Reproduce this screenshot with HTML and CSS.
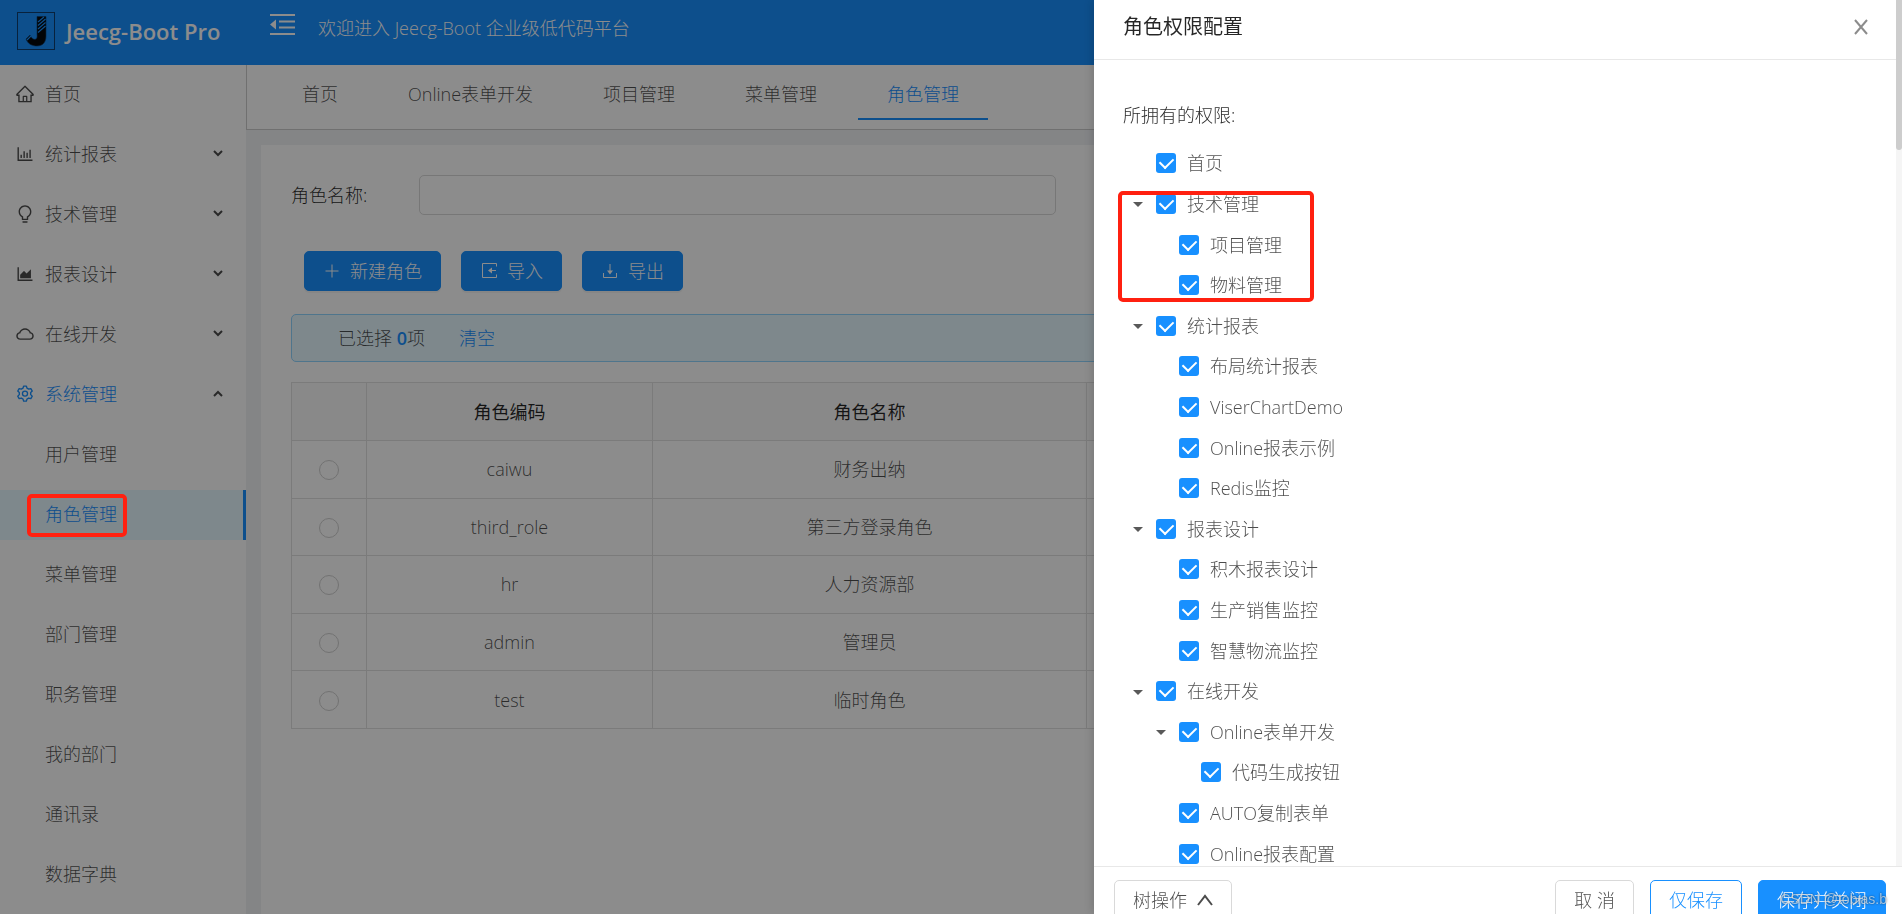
FILE: index.html
```html
<!DOCTYPE html>
<html lang="zh-CN">
<head>
<meta charset="utf-8">
<title>角色管理 - Jeecg-Boot Pro</title>
<link rel="stylesheet" href="styles.css">
</head>
<body>
<div class="app">
  <header class="topbar">
    <div class="brand">
      <svg class="logo" viewBox="0 0 38 38" aria-hidden="true"><rect x=".5" y=".5" width="37" height="37" fill="none" stroke="#0f3f70"/><path d="M20 4.500h9V24c0 6-3 10-9 10-5 0-9-2-11-7l4-4c2 4 4 5 6 4 1.500-1 1-3 1-5z" fill="#05080c" stroke="#0f3f70" stroke-width=".6"/><path d="M21 10l6-5M21 13.500l7.500-6.500M21 17l7.500-6.500M21 20.500l7.500-6.500M10 28l4-4" stroke="#1890ff" stroke-width="1.200"/></svg>
      <h1 class="brand-name">Jeecg-Boot Pro</h1>
    </div>
    <button class="fold" type="button" aria-label="收起菜单"><svg viewBox="0 0 25 21" aria-hidden="true"><path d="M0 1h25M9 7.500h16M9 13.500h16M0 20h25" stroke="currentColor" stroke-width="2" fill="none"/><path d="M6 5.500v10L0 10.500z" fill="currentColor"/></svg></button>
    <span class="welcome">欢迎进入 Jeecg-Boot 企业级低代码平台</span>
  </header>
  <div class="layout">
    <nav class="sidebar">
      <a class="item" href="#"><svg class="ico" viewBox="0 0 1024 1024"><path d="M946.500 505L560.100 118.800l-25.900-25.900a31.500 31.500 0 0 0-44.400 0L77.500 505a63.900 63.900 0 0 0-18.800 46c.4 35.200 29.700 63.300 64.900 63.300h42.500V940h691.800V614.300h43.400c17.100 0 33.200-6.700 45.300-18.800a63.600 63.600 0 0 0 18.700-45.300c0-17-6.700-33.100-18.800-45.200zM568 868H456V664h112v204zm217.900-325.700V868H632V640c0-22.100-17.900-40-40-40H432c-22.100 0-40 17.900-40 40v228H238.100V542.300h-96l370-369.700 23.100 23.100L882 542.300h-96.100z"/></svg>首页</a>
      <a class="item" href="#"><svg class="ico" viewBox="0 0 1024 1024"><path d="M888 792H200V168c0-4.400-3.600-8-8-8h-56c-4.400 0-8 3.600-8 8v688c0 4.400 3.600 8 8 8h752c4.400 0 8-3.600 8-8v-56c0-4.400-3.600-8-8-8zm-600-80h56c4.400 0 8-3.600 8-8V560c0-4.400-3.600-8-8-8h-56c-4.400 0-8 3.600-8 8v144c0 4.400 3.600 8 8 8zm152 0h56c4.400 0 8-3.600 8-8V384c0-4.400-3.600-8-8-8h-56c-4.400 0-8 3.600-8 8v320c0 4.400 3.600 8 8 8zm152 0h56c4.400 0 8-3.600 8-8V462c0-4.400-3.600-8-8-8h-56c-4.400 0-8 3.600-8 8v242c0 4.400 3.600 8 8 8zm152 0h56c4.400 0 8-3.600 8-8V304c0-4.400-3.600-8-8-8h-56c-4.400 0-8 3.600-8 8v400c0 4.400 3.600 8 8 8z"/></svg>统计报表<svg class="arrow" viewBox="0 0 12 8"><path d="M2 1l4 4 4-4"/></svg></a>
      <a class="item" href="#"><svg class="ico" viewBox="0 0 1024 1024"><path d="M632 888H392c-4.400 0-8 3.600-8 8v32c0 17.700 14.300 32 32 32h192c17.700 0 32-14.300 32-32v-32c0-4.400-3.600-8-8-8zM512 64c-181.100 0-328 146.900-328 328 0 121.400 66 227.400 164 284.100V792c0 17.700 14.300 32 32 32h264c17.700 0 32-14.300 32-32V676.100c98-56.700 164-162.700 164-284.100 0-181.100-146.900-328-328-328zm127.900 549.800L604 634.600V752H420V634.600l-35.900-20.800C305.400 568.300 256 484.500 256 392c0-141.400 114.600-256 256-256s256 114.600 256 256c0 92.500-49.400 176.300-128.100 221.800z"/></svg>技术管理<svg class="arrow" viewBox="0 0 12 8"><path d="M2 1l4 4 4-4"/></svg></a>
      <a class="item" href="#"><svg class="ico" viewBox="0 0 1024 1024"><path d="M888 792H200V168c0-4.400-3.600-8-8-8h-56c-4.400 0-8 3.600-8 8v688c0 4.400 3.600 8 8 8h752c4.400 0 8-3.600 8-8v-56c0-4.400-3.600-8-8-8zm-616-64h536c4.400 0 8-3.600 8-8V284c0-7.200-8.700-10.700-13.700-5.700L592 488.600l-125.400-124a8 8 0 0 0-11.300 0l-189 189.600a7.900 7.900 0 0 0-2.300 5.600V720c0 4.400 3.600 8 8 8z"/></svg>报表设计<svg class="arrow" viewBox="0 0 12 8"><path d="M2 1l4 4 4-4"/></svg></a>
      <a class="item" href="#"><svg class="ico" viewBox="0 0 1024 1024"><path d="M811.400 418.700C765.600 297.900 648.900 212 512.200 212S258.800 297.800 213 418.600C127.300 441.100 64 519.100 64 612c0 110.500 89.500 200 199.900 200h496.200C870.500 812 960 722.500 960 612c0-92.700-63.100-170.700-148.600-193.300zm36.300 281a123.070 123.070 0 0 1-87.600 36.300H263.900c-33.100 0-64.200-12.900-87.600-36.300A123.300 123.300 0 0 1 140 612c0-28 9.100-54.300 26.200-76.300a125.700 125.700 0 0 1 66.100-43.700l37.900-9.900 13.900-36.600c8.600-22.800 20.600-44.100 35.700-63.400a245.600 245.600 0 0 1 52.400-49.900c41.100-28.900 89.500-44.200 140-44.200s98.900 15.300 140 44.200c19.900 14 37.500 30.800 52.400 49.900 15.100 19.300 27.100 40.700 35.700 63.400l13.800 36.500 37.800 10c54.300 14.500 92.100 63.800 92.100 120 0 33.100-12.900 64.300-36.300 87.700z"/></svg>在线开发<svg class="arrow" viewBox="0 0 12 8"><path d="M2 1l4 4 4-4"/></svg></a>
      <a class="item open" href="#"><svg class="ico" viewBox="0 0 1024 1024"><g fill="none" stroke="currentColor" stroke-width="68" stroke-linejoin="round"><path d="M440 105h144l28 108 92 53 108-30 72 125-80 78v106l80 78-72 125-108-30-92 53-28 108H440l-28-108-92-53-108 30-72-125 80-78V439l-80-78 72-125 108 30 92-53z"/><circle cx="512" cy="492" r="130"/></g></svg>系统管理<svg class="arrow" viewBox="0 0 12 8"><path d="M2 6l4-4 4 4"/></svg></a>
      <a class="item sub" href="#">用户管理</a>
      <a class="item sub active" href="#" aria-current="page">角色管理</a>
      <a class="item sub" href="#">菜单管理</a>
      <a class="item sub" href="#">部门管理</a>
      <a class="item sub" href="#">职务管理</a>
      <a class="item sub" href="#">我的部门</a>
      <a class="item sub" href="#">通讯录</a>
      <a class="item sub" href="#">数据字典</a>
    </nav>
    <main class="main">
      <nav class="tabs">
        <a class="tab" href="#">首页</a>
        <a class="tab" href="#">Online表单开发</a>
        <a class="tab" href="#">项目管理</a>
        <a class="tab" href="#">菜单管理</a>
        <a class="tab current" href="#">角色管理</a>
      </nav>
      <section class="card">
        <form class="search">
          <label for="role-name">角色名称:</label>
          <input id="role-name" class="text-input" type="text">
        </form>
        <div class="actions">
          <button class="btn primary" type="button"><svg class="bico" viewBox="0 0 18 18"><path d="M9 2.500v13M2.500 9h13"/></svg>新建角色</button>
          <button class="btn primary" type="button"><svg class="bico" viewBox="0 0 18 18"><path d="M16.500 4.500v-3h-14v14h14v-3M16 8.500H9"/><path d="M8 8.500l4-3v6z" fill="currentColor" stroke="none"/></svg>导入</button>
          <button class="btn primary" type="button"><svg class="bico" viewBox="0 0 18 18"><path d="M2.500 11v4.500h13V11M9 2v8"/><path d="M9 12.500l-3-4h6z" fill="currentColor" stroke="none"/></svg>导出</button>
        </div>
        <div class="notice"><span>已选择 <b>0</b>项</span><a href="#">清空</a></div>
        <table class="grid">
          <colgroup><col class="c-pick"><col class="c-code"><col class="c-name"><col></colgroup>
          <thead><tr><th></th><th>角色编码</th><th>角色名称</th><th></th></tr></thead>
          <tbody>
            <tr><td><input type="radio" name="role" aria-label="caiwu"></td><td>caiwu</td><td>财务出纳</td><td></td></tr>
            <tr><td><input type="radio" name="role" aria-label="third_role"></td><td>third_role</td><td>第三方登录角色</td><td></td></tr>
            <tr><td><input type="radio" name="role" aria-label="hr"></td><td>hr</td><td>人力资源部</td><td></td></tr>
            <tr><td><input type="radio" name="role" aria-label="admin"></td><td>admin</td><td>管理员</td><td></td></tr>
            <tr><td><input type="radio" name="role" aria-label="test"></td><td>test</td><td>临时角色</td><td></td></tr>
          </tbody>
        </table>
      </section>
    </main>
  </div>
</div>
<div class="mask"></div>
<div class="mark mark-menu"></div>
<aside class="drawer">
  <div class="drawer-view">
    <div class="drawer-content">
      <div class="drawer-head">
        <h2 class="drawer-title">角色权限配置</h2>
        <button class="close" type="button" aria-label="关闭"><svg viewBox="0 0 16 16"><path d="M2 1l12 14M14 1L2 15"/></svg></button>
      </div>
      <div class="drawer-body">
        <p class="tree-label">所拥有的权限:</p>
        <ul class="tree">
          <li class="node"><label><input type="checkbox" checked>首页</label></li>
          <li class="node parent"><label><input type="checkbox" checked>技术管理</label></li>
          <li class="node l2"><label><input type="checkbox" checked>项目管理</label></li>
          <li class="node l2"><label><input type="checkbox" checked>物料管理</label></li>
          <li class="node parent"><label><input type="checkbox" checked>统计报表</label></li>
          <li class="node l2"><label><input type="checkbox" checked>布局统计报表</label></li>
          <li class="node l2"><label><input type="checkbox" checked>ViserChartDemo</label></li>
          <li class="node l2"><label><input type="checkbox" checked>Online报表示例</label></li>
          <li class="node l2"><label><input type="checkbox" checked>Redis监控</label></li>
          <li class="node parent"><label><input type="checkbox" checked>报表设计</label></li>
          <li class="node l2"><label><input type="checkbox" checked>积木报表设计</label></li>
          <li class="node l2"><label><input type="checkbox" checked>生产销售监控</label></li>
          <li class="node l2"><label><input type="checkbox" checked>智慧物流监控</label></li>
          <li class="node parent"><label><input type="checkbox" checked>在线开发</label></li>
          <li class="node l2 parent"><label><input type="checkbox" checked>Online表单开发</label></li>
          <li class="node l3"><label><input type="checkbox" checked>代码生成按钮</label></li>
          <li class="node l2"><label><input type="checkbox" checked>AUTO复制表单</label></li>
          <li class="node l2"><label><input type="checkbox" checked>Online报表配置</label></li>
        </ul>
      </div>
    </div>
    <div class="track"><div class="thumb"></div></div>
  </div>
  <footer class="drawer-foot">
    <button class="btn" type="button">树操作<svg class="up" viewBox="0 0 16 12"><path d="M1 11l7-9 7 9"/></svg></button>
    <div class="foot-right">
      <button class="btn" type="button">取 消</button>
      <button class="btn ghost" type="button">仅保存</button>
      <button class="btn primary" type="button">保存并关闭</button>
    </div>
  </footer>
</aside>
<div class="mark mark-tree"></div>
<span class="watermark">CSDN @tobias.b</span>
</body>
</html>
```
FILE: styles.css
```css
* { box-sizing: border-box; }
body {
  margin: 0;
  height: 100vh;
  overflow: hidden;
  font: 300 18px/26px "Open Sans", "Noto Sans CJK SC", sans-serif;
  color: rgba(0, 0, 0, .7);
  background: #f0f2f5;
}
a { color: inherit; text-decoration: none; }
button, input { font: inherit; color: inherit; }
h1, h2, p, ul { margin: 0; padding: 0; }

.app { display: flex; flex-direction: column; height: 100vh; }
.topbar {
  display: flex;
  flex: none;
  height: 65px;
  color: #fff;
  background: #1890ff;
}
.brand { display: flex; align-items: center; gap: 11px; width: 246px; padding-left: 17px; height: 62px; }
.logo { width: 38px; height: 38px; display: block; }
.brand-name { font-size: 22px; font-weight: 600; line-height: 30px; white-space: nowrap; }
.fold { width: 25px; height: 21px; margin: 14px 23px 0 24px; padding: 0; border: 0; background: none; color: #fff; }
.fold svg { display: block; width: 25px; height: 21px; }
.welcome { line-height: 56px; }

.layout { display: flex; flex: 1; min-height: 0; }
.sidebar {
  display: flex;
  flex-direction: column;
  flex: none;
  gap: 10px;
  width: 246px;
  padding-top: 5px;
  overflow: hidden;
  background: #fff;
}
.item {
  display: flex;
  flex: none;
  align-items: center;
  height: 50px;
  padding: 0 22px 2px 15px;
}
.ico { width: 20px; height: 20px; margin-right: 10px; fill: currentColor; }
.arrow { width: 12px; height: 8px; margin-left: auto; fill: none; stroke: rgba(0, 0, 0, .7); stroke-width: 2; }
.sub { padding-left: 45px; }
.open { color: #1890ff; }
.active { color: #1890ff; background: #e6f7ff; border-right: 3px solid #1890ff; }

.main { flex: 1; min-width: 0; display: flex; flex-direction: column; }
.tabs {
  display: flex;
  gap: 12px;
  flex: none;
  height: 65px;
  padding-left: 26px;
  background: #fff;
  border-left: 1px solid #ccc;
  border-bottom: 1px solid #ccc;
}
.tab { height: 55px; padding: 0 29px; line-height: 58px; }
.current { color: #1890ff; border-bottom: 2px solid #1890ff; }
.card { flex: 1; margin: 15px 15px 0; padding: 30px; background: #fff; }
.search { display: flex; align-items: center; color: rgba(0, 0, 0, .85); }
.search label { width: 128px; }
.text-input { width: 637px; height: 40px; padding: 0 12px; border: 1px solid #d9d9d9; border-radius: 5px; background: #fff; }
.actions { display: flex; gap: 20px; margin: 36px 0 23px 13px; }
.btn {
  display: inline-flex;
  align-items: center;
  height: 40px;
  padding: 0 18px;
  border: 1px solid #d9d9d9;
  border-radius: 5px;
  background: #fff;
  white-space: nowrap;
}
.primary { color: #fff; background: #1890ff; border-color: #1890ff; box-shadow: 0 2px 0 rgba(0, 0, 0, .045); }
.ghost { color: #1890ff; border-color: #1890ff; }
.bico { width: 18px; height: 18px; margin-right: 9px; fill: none; stroke: currentColor; stroke-width: 1; }
.notice {
  display: flex;
  align-items: center;
  gap: 34px;
  height: 48px;
  padding-left: 46px;
  background: #e6f7ff;
  border: 1px solid #91d5ff;
  border-radius: 5px;
}
.notice a, .notice b { color: #1890ff; }
.notice b { font-weight: 600; }
.grid {
  width: 100%;
  height: 347px;
  margin-top: 20px;
  table-layout: fixed;
  border-collapse: collapse;
  text-align: center;
}
.grid th, .grid td { padding: 0; border: 1px solid #e0e0e0; }
.grid th { height: 58px; font-weight: 400; color: rgba(0, 0, 0, .85); background: #fafafa; }
.c-pick { width: 75px; }
.c-code { width: 286px; }
.c-name { width: 434px; }
.grid input {
  appearance: none;
  display: block;
  width: 20px;
  height: 20px;
  margin: 2px auto 0;
  border: 1px solid #d0d0d0;
  border-radius: 50%;
}

.mask { position: fixed; inset: 0; background: rgba(0, 0, 0, .45); }
.mark { position: fixed; border: 4px solid #ff2010; border-radius: 5px; }
.mark-menu { left: 27px; top: 494px; width: 100px; height: 43px; }
.mark-tree { right: 588px; top: 191px; width: 196px; height: 111px; }

.drawer {
  position: fixed;
  top: 0;
  right: 0;
  bottom: 0;
  width: 808px;
  max-width: 100%;
  display: flex;
  flex-direction: column;
  overflow: hidden;
  background: #fff;
  box-shadow: -2px 0 10px rgba(0, 0, 0, .15);
}
.drawer-view { display: flex; flex: 1; min-height: 0; }
.drawer-content { flex: 1; overflow: hidden; }
.drawer-head {
  display: flex;
  justify-content: space-between;
  align-items: center;
  height: 60px;
  padding: 0 27px 6px 29px;
  border-bottom: 1px solid #e8e8e8;
}
.drawer-title { font-size: 20px; font-weight: 400; color: rgba(0, 0, 0, .85); }
.close { width: 16px; height: 16px; padding: 0; border: 0; background: none; }
.close svg { display: block; fill: none; stroke: #8c8c8c; stroke-width: 2; }
.drawer-body { padding: 42px 29px 0; }
.tree-label { color: rgba(0, 0, 0, .85); }
.tree {
  display: grid;
  grid-auto-rows: 1fr;
  height: 731px;
  margin-top: 15px;
  list-style: none;
}
.node { display: flex; align-items: center; padding-left: 33px; }
.l2 { padding-left: 56px; }
.l3 { padding-left: 78px; }
.parent::before {
  content: "";
  width: 0;
  margin: 2px 13px 0 -23px;
  border: 5px solid transparent;
  border-top: 5px solid #595959;
  border-bottom: 0;
}
.node label { display: flex; align-items: center; gap: 11px; }
.node input {
  appearance: none;
  display: grid;
  place-items: center;
  width: 20px;
  height: 20px;
  margin: 0;
  border-radius: 3px;
  background: #1890ff;
}
.node input::before {
  content: "";
  width: 7px;
  height: 11px;
  margin-top: -3px;
  border: solid #fff;
  border-width: 0 2px 2px 0;
  transform: rotate(45deg);
}
.track { width: 6px; background: #f5f5f5; }
.thumb { height: 150px; background: #cdcdcd; border-radius: 0 0 3px 3px; }
.drawer-foot {
  display: flex;
  flex: none;
  justify-content: space-between;
  align-items: flex-start;
  height: 48px;
  padding: 13px 16px 0 20px;
  border-top: 1px solid #e8e8e8;
}
.foot-right { display: flex; gap: 16px; }
.up { width: 16px; height: 12px; margin-left: 10px; fill: none; stroke: currentColor; stroke-width: 2; }
.watermark {
  position: fixed;
  right: 15px;
  bottom: 5px;
  font: 14px/20px "Liberation Sans", sans-serif;
  color: rgba(255, 255, 255, .6);
  text-shadow: 0 0 2px rgba(0, 0, 0, .6);
}
```
